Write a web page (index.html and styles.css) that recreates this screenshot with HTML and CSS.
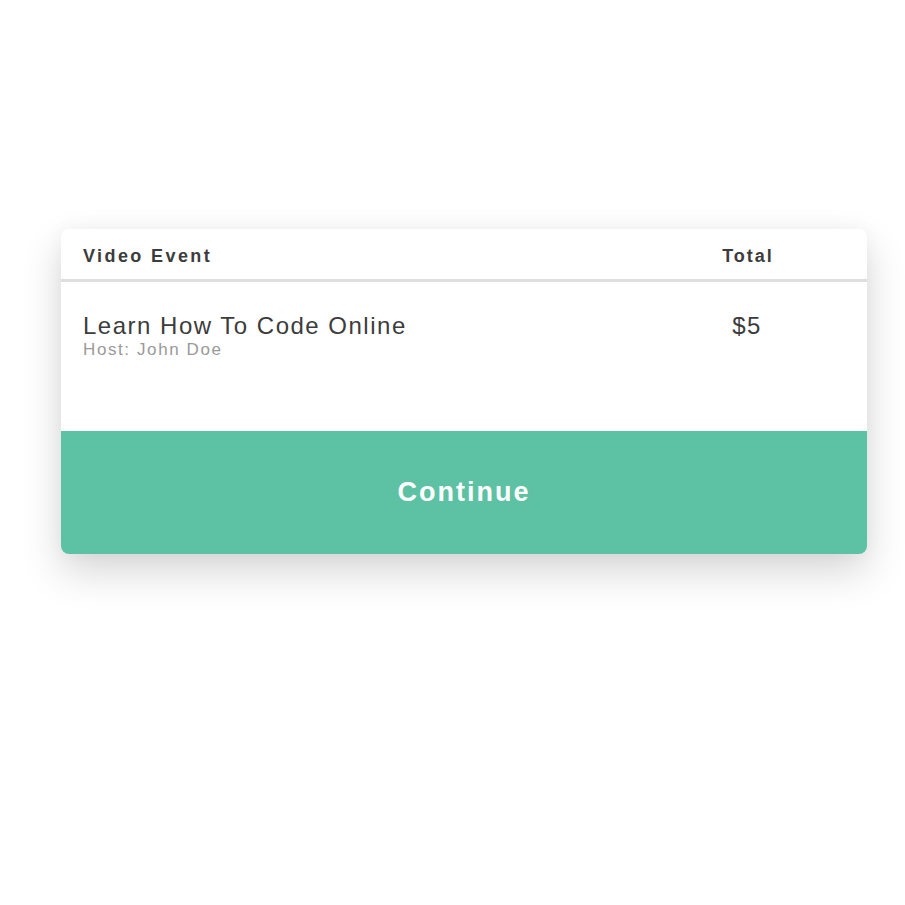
FILE: index.html
```html
<!DOCTYPE html>
<html>
<head>
<meta charset="utf-8">
<link rel="stylesheet" href="styles.css">
</head>
<body>
<div class="page">
  <div class="card">
    <div class="row head">
      <div class="col-main">Video Event</div>
      <div class="col-total">Total</div>
    </div>
    <div class="row body">
      <div class="col-main">
        <div class="title">Learn How To Code Online</div>
        <div class="host">Host: John Doe</div>
      </div>
      <div class="col-total price">$5</div>
    </div>
    <div class="btn">Continue</div>
  </div>
</div>
</body>
</html>
```
FILE: styles.css
```css
html, body { margin: 0; padding: 0; background: #fff; }
body { font-family: "Liberation Sans", Arial, sans-serif; color: #3c3c3c; }
.page { padding: 229px 38px 120px 61px; }
.card {
  width: 806px;
  background: #fff;
  border-radius: 8px;
  overflow: hidden;
  box-shadow: 0 18px 40px rgba(0,0,0,0.16), 0 0 20px rgba(0,0,0,0.04);
}
.row { display: grid; grid-template-columns: 1fr 240px; padding-left: 22px; }
.head {
  height: 50px;
  box-sizing: border-box;
  align-items: center;
  font-weight: bold;
  font-size: 18px;
  letter-spacing: 2.4px;
  border-bottom: 3px solid #dedede;
  padding-top: 4px;
  height: 53px;
}
.col-total { text-align: center; }
.head .col-total { letter-spacing: 2px; padding-left: 2px; }
.body { height: 149px; align-items: start; padding-top: 32px; box-sizing: border-box; }
.title { font-size: 24px; letter-spacing: 1.5px; line-height: 24px; color: #3c3c3c; }
.host { font-size: 17px; letter-spacing: 1.6px; line-height: 24px; margin-top: 0; color: #9a9a9a; }
.price { font-size: 24px; letter-spacing: 1.5px; line-height: 24px; padding-left: 0; }
.btn {
  height: 123px;
  background: #5dc1a3;
  color: #fff;
  font-weight: bold;
  font-size: 27px;
  letter-spacing: 2px;
  display: flex;
  align-items: center;
  justify-content: center;
}
```
